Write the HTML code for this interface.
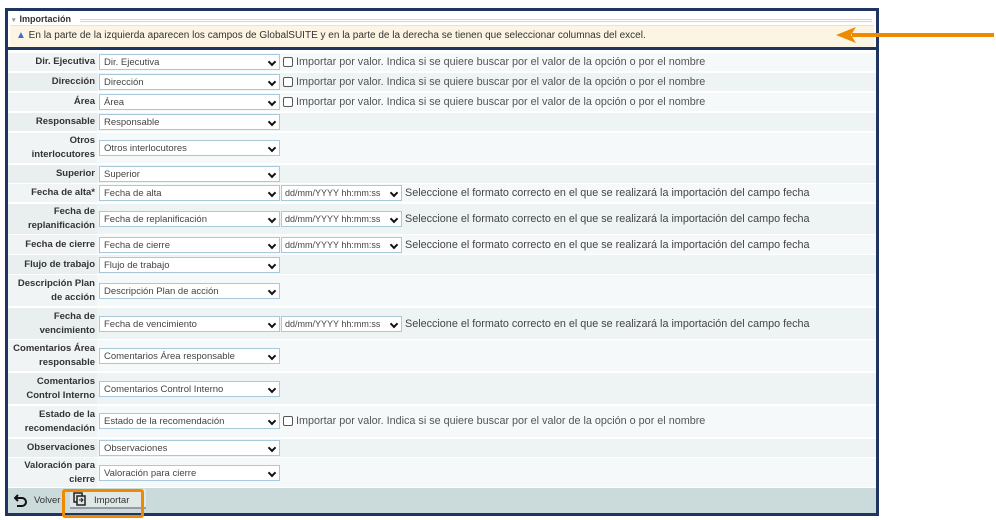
<!DOCTYPE html>
<html><head><meta charset="utf-8"><style>
*{box-sizing:border-box;margin:0;padding:0}
body{width:996px;height:520px;background:#fff;font-family:"Liberation Sans",sans-serif;position:relative;overflow:hidden;color:#444}
.frame{position:absolute;left:5px;top:8px;width:874px;height:508px;border:3px solid #1f3461;background:#fff}
.hdr{position:absolute;left:0;top:0;width:868px;height:39px;border-bottom:3px solid #1f3461}
.leg{position:absolute;left:4px;top:3px;font-size:9px;font-weight:bold;color:#333}
.leg:before{content:"\25BE";color:#999;font-size:7px;margin-right:4px}
.legline{position:absolute;left:72px;right:4px;top:8px;border-top:1px solid #c9d6e0;border-bottom:1px solid #c9d6e0;height:3px}
.note{position:absolute;left:2px;right:2px;top:14px;height:22px;background:#fdf5e4;border-top:1px solid #f3e2b8;font-size:10px;color:#333;padding:4px 0 0 6px;white-space:nowrap}
.row{position:absolute;left:0;width:868px;display:flex;align-items:center}
.lab{width:89px;height:100%;display:flex;align-items:center;justify-content:flex-end;text-align:right;font-size:9.5px;font-weight:bold;color:#333;padding-right:2px;line-height:14px;white-space:nowrap}
.sel{position:absolute;left:91px;width:181px;height:16px;border:1px solid #a8c8dc;background:#fff;font-size:9.5px;color:#444;padding:2px 0 0 4px;white-space:nowrap}
.sel:after,.ds:after{content:"";position:absolute;right:4px;top:4px;width:4px;height:4px;border-right:2px solid #111;border-bottom:2px solid #111;transform:rotate(45deg)}
.ds{position:absolute;left:273px;width:121px;height:16px;border:1px solid #a8c8dc;background:#fff;font-size:9px;color:#444;padding:2px 0 0 3px;white-space:nowrap}
.cb{position:absolute;left:275px;width:10px;height:10px;border:1px solid #555;border-radius:2px;background:#fff}
.t1{position:absolute;left:288px;font-size:10.8px;color:#555;white-space:nowrap}
.t2{position:absolute;left:397px;font-size:10.8px;color:#444;white-space:nowrap}
.foot{position:absolute;left:0;top:477px;width:868px;height:25px;background:#cbdbdb}
</style></head><body>
<div class="frame">
<div class="hdr"><div class="leg">Importación</div><div class="legline"></div>
<div class="note"><span style="color:#3a6fd8">&#9650;</span> En la parte de la izquierda aparecen los campos de GlobalSUITE y en la parte de la derecha se tienen que seleccionar columnas del excel.</div></div>

<div class="row" style="top:42px;height:18px;background:#f6f9fa"><div class="lab" style="background:#f0f4f4">Dir. Ejecutiva</div><div class="sel" style="top:1px">Dir. Ejecutiva</div><div class="cb" style="top:4px"></div><div class="t1" style="top:3px">Importar por valor. Indica si se quiere buscar por el valor de la opción o por el nombre</div></div>
<div class="row" style="top:62px;height:18px;background:#eef3f3"><div class="lab" style="background:#e9efef">Dirección</div><div class="sel" style="top:1px">Dirección</div><div class="cb" style="top:4px"></div><div class="t1" style="top:3px">Importar por valor. Indica si se quiere buscar por el valor de la opción o por el nombre</div></div>
<div class="row" style="top:82px;height:18px;background:#f6f9fa"><div class="lab" style="background:#f0f4f4">Área</div><div class="sel" style="top:1px">Área</div><div class="cb" style="top:4px"></div><div class="t1" style="top:3px">Importar por valor. Indica si se quiere buscar por el valor de la opción o por el nombre</div></div>
<div class="row" style="top:102px;height:18px;background:#eef3f3"><div class="lab" style="background:#e9efef">Responsable</div><div class="sel" style="top:1px">Responsable</div></div>
<div class="row" style="top:122px;height:30px;background:#f6f9fa"><div class="lab" style="background:#f0f4f4">Otros<br>interlocutores</div><div class="sel" style="top:7px">Otros interlocutores</div></div>
<div class="row" style="top:154px;height:18px;background:#eef3f3"><div class="lab" style="background:#e9efef">Superior</div><div class="sel" style="top:1px">Superior</div></div>
<div class="row" style="top:173px;height:18px;background:#f6f9fa"><div class="lab" style="background:#f0f4f4">Fecha de alta*</div><div class="sel" style="top:1px">Fecha de alta</div><div class="ds" style="top:1px">dd/mm/YYYY hh:mm:ss</div><div class="t2" style="top:3px">Seleccione el formato correcto en el que se realizará la importación del campo fecha</div></div>
<div class="row" style="top:193px;height:30px;background:#eef3f3"><div class="lab" style="background:#e9efef">Fecha de<br>replanificación</div><div class="sel" style="top:7px">Fecha de replanificación</div><div class="ds" style="top:7px">dd/mm/YYYY hh:mm:ss</div><div class="t2" style="top:9px">Seleccione el formato correcto en el que se realizará la importación del campo fecha</div></div>
<div class="row" style="top:224px;height:19px;background:#f6f9fa"><div class="lab" style="background:#f0f4f4">Fecha de cierre</div><div class="sel" style="top:2px">Fecha de cierre</div><div class="ds" style="top:2px">dd/mm/YYYY hh:mm:ss</div><div class="t2" style="top:4px">Seleccione el formato correcto en el que se realizará la importación del campo fecha</div></div>
<div class="row" style="top:244px;height:19px;background:#eef3f3"><div class="lab" style="background:#e9efef">Flujo de trabajo</div><div class="sel" style="top:2px">Flujo de trabajo</div></div>
<div class="row" style="top:264px;height:31px;background:#f6f9fa"><div class="lab" style="background:#f0f4f4">Descripción Plan<br>de acción</div><div class="sel" style="top:8px">Descripción Plan de acción</div></div>
<div class="row" style="top:297px;height:31px;background:#eef3f3"><div class="lab" style="background:#e9efef">Fecha de<br>vencimiento</div><div class="sel" style="top:8px">Fecha de vencimiento</div><div class="ds" style="top:8px">dd/mm/YYYY hh:mm:ss</div><div class="t2" style="top:10px">Seleccione el formato correcto en el que se realizará la importación del campo fecha</div></div>
<div class="row" style="top:329px;height:31px;background:#f6f9fa"><div class="lab" style="background:#f0f4f4">Comentarios Área<br>responsable</div><div class="sel" style="top:8px">Comentarios Área responsable</div></div>
<div class="row" style="top:362px;height:31px;background:#eef3f3"><div class="lab" style="background:#e9efef">Comentarios<br>Control Interno</div><div class="sel" style="top:8px">Comentarios Control Interno</div></div>
<div class="row" style="top:395px;height:31px;background:#f6f9fa"><div class="lab" style="background:#f0f4f4">Estado de la<br>recomendación</div><div class="sel" style="top:7px">Estado de la recomendación</div><div class="cb" style="top:10px"></div><div class="t1" style="top:9px">Importar por valor. Indica si se quiere buscar por el valor de la opción o por el nombre</div></div>
<div class="row" style="top:428px;height:18px;background:#eef3f3"><div class="lab" style="background:#e9efef">Observaciones</div><div class="sel" style="top:1px">Observaciones</div></div>
<div class="row" style="top:447px;height:29px;background:#f6f9fa"><div class="lab" style="background:#f0f4f4">Valoración para<br>cierre</div><div class="sel" style="top:7px">Valoración para cierre</div></div>

<div class="foot">
<svg style="position:absolute;left:6px;top:5px" width="14" height="14" viewBox="0 0 14 14"><path d="M4 2 L1 5 L4 8 M1 5 H8 A4 4 0 0 1 8 13 H3" fill="none" stroke="#111" stroke-width="2"/></svg>
<span style="position:absolute;left:26px;top:7px;font-size:9.5px;color:#333">Volver</span>
<div style="position:absolute;left:62px;top:1px;width:76px;height:20px;background:#dfe7e7;border-bottom:2px solid #99a"></div>
<svg style="position:absolute;left:65px;top:4px" width="13" height="14" viewBox="0 0 13 14"><rect x="1" y="1" width="8" height="9" fill="none" stroke="#222" stroke-width="1.5"/><rect x="4" y="4" width="8" height="9" fill="#dfe7e7" stroke="#222" stroke-width="1.5"/><path d="M6 8h4M8 6l2 2-2 2" fill="none" stroke="#222" stroke-width="1"/></svg>
<span style="position:absolute;left:86px;top:7px;font-size:9.5px;color:#333">Importar</span>
</div>
</div>
<div style="position:absolute;left:62px;top:489px;width:82px;height:29px;border:3px solid #ee8a00;border-radius:3px"></div>
<div style="position:absolute;left:852px;top:33px;width:142px;height:4px;background:#ee8a00"></div>
<svg style="position:absolute;left:834px;top:25px" width="22" height="20" viewBox="0 0 22 20"><path d="M2 10 L22 2 L17 10 L22 18 Z" fill="#ee8a00"/></svg>
</body></html>
